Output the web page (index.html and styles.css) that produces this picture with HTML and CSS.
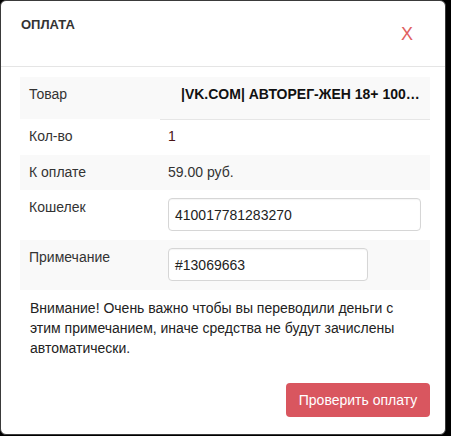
FILE: index.html
```html
<!DOCTYPE html>
<html lang="ru">
<head>
<meta charset="utf-8">
<title>Оплата</title>
<link rel="stylesheet" href="styles.css">
</head>
<body>
<div class="modal">
  <div class="modal-header">
    <h4 class="modal-title">ОПЛАТА</h4>
    <span class="close">X</span>
  </div>
  <div class="modal-body">
    <div class="table">
      <div class="row striped r1">
        <div class="label">Товар</div>
        <div class="value product">|VK.COM| АВТОРЕГ-ЖЕН 18+ 100…</div>
      </div>
      <div class="row r2">
        <div class="label">Кол-во</div>
        <div class="value bordered qty">1</div>
      </div>
      <div class="row striped r3">
        <div class="label">К оплате</div>
        <div class="value">59.00 руб.</div>
      </div>
      <div class="row r4">
        <div class="label">Кошелек</div>
        <div class="value field"><div class="input wide">410017781283270</div></div>
      </div>
      <div class="row striped r5">
        <div class="label">Примечание</div>
        <div class="value field"><div class="input narrow">#13069663</div></div>
      </div>
    </div>
    <p class="notice">Внимание! Очень важно чтобы вы переводили деньги с этим примечанием, иначе средства не будут зачислены автоматически.</p>
  </div>
  <div class="modal-footer">
    <button class="btn">Проверить оплату</button>
  </div>
</div>
</body>
</html>
```
FILE: styles.css
```css
html, body {
  margin: 0;
  padding: 0;
  background: #000;
}
body {
  font-family: "Liberation Sans", Arial, sans-serif;
  font-size: 14px;
  line-height: 20px;
  color: #333;
}
.modal {
  box-sizing: border-box;
  width: 446px;
  height: 435px;
  background: #fff;
  border: 1px solid #3a3a3a;
  border-radius: 6px;
  display: flex;
  flex-direction: column;
}
.modal-header {
  box-sizing: border-box;
  height: 66px;
  border-bottom: 1px solid #e5e5e5;
  padding: 15px 20px 0 20px;
  display: flex;
  justify-content: space-between;
  align-items: flex-start;
}
.modal-title {
  margin: 0;
  font-size: 13px;
  line-height: 18px;
  font-weight: bold;
  color: #333;
}
.close {
  margin-top: 8px;
  margin-right: 12px;
  font-size: 18px;
  line-height: 20px;
  color: #e0605f;
}
.modal-body {
  padding: 10px 15px 0 19px;
}
.table {
  width: 410px;
}
.row {
  display: grid;
  grid-template-columns: 140px 270px;
  box-sizing: border-box;
}
.striped {
  background: #f9f9f9;
}
.r1 { height: 42px; }
.r2 { height: 36px; }
.r3 { height: 35px; }
.r4 { height: 50px; }
.r5 { height: 50px; }
.label {
  padding: 7px 8px 0 9px;
}
.value {
  padding: 7px 8px 0 8px;
  min-width: 0;
}
.bordered {
  border-top: 1px solid #e6e6e6;
  padding-top: 6px;
}
.product {
  font-weight: bold;
  color: #111;
  padding-left: 21px;
  white-space: nowrap;
  overflow: hidden;
  text-overflow: ellipsis;
}
.qty {
  color: #4a1414;
}
.field {
  padding-top: 8px;
}
.input {
  box-sizing: border-box;
  height: 33px;
  border: 1px solid #d6d6d6;
  border-radius: 4px;
  background: #fff;
  padding: 6px 6px;
  color: #222;
  box-shadow: inset 0 1px 1px rgba(0,0,0,.04);
}
.wide { width: 253px; }
.narrow { width: 200px; }
.notice {
  margin: 8px 0 0 0;
  padding-left: 10px;
  width: 380px;
  color: #222;
}
.modal-footer {
  display: flex;
  justify-content: flex-end;
  padding: 25px 15px 0 0;
}
.btn {
  box-sizing: border-box;
  width: 144px;
  height: 34px;
  border: none;
  border-radius: 4px;
  background: #d9565f;
  color: #fff;
  font-family: "Liberation Sans", Arial, sans-serif;
  font-size: 14px;
  line-height: 20px;
  padding: 6px 12px;
}
```
